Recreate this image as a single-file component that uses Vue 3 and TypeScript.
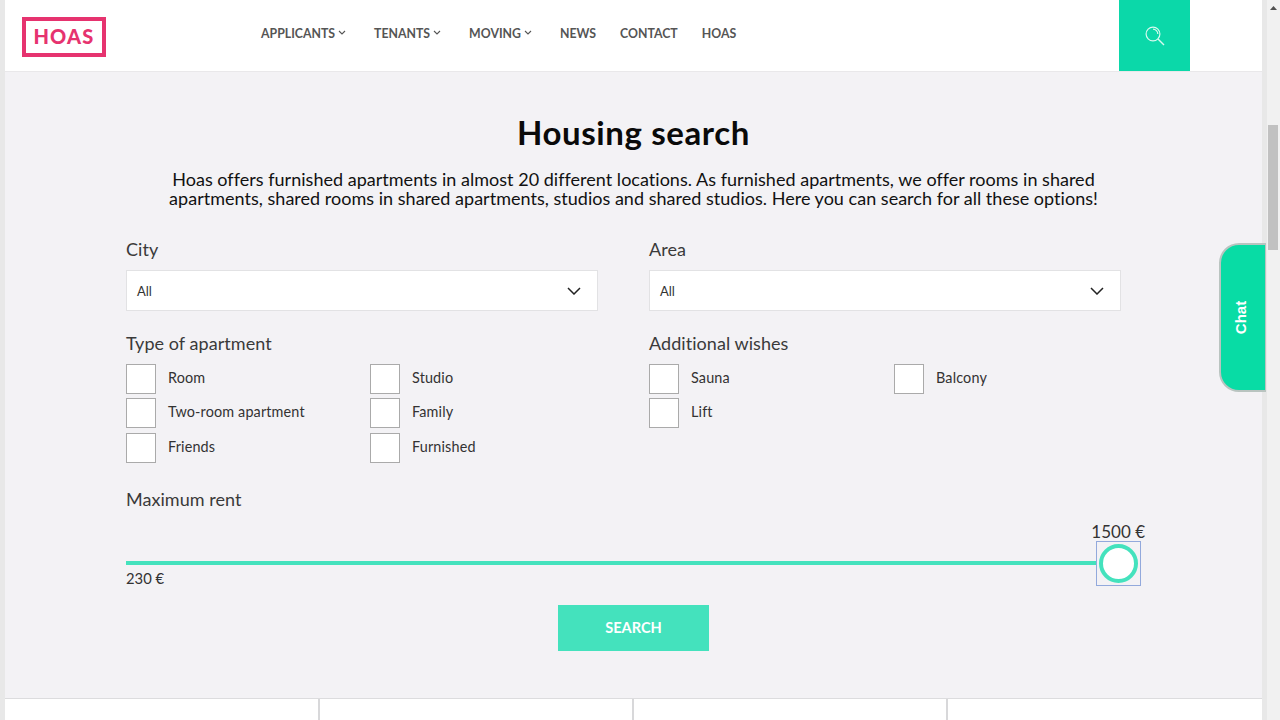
<script setup lang="ts">
const nav = [
  { label: 'APPLICANTS', caret: true },
  { label: 'TENANTS', caret: true },
  { label: 'MOVING', caret: true },
  { label: 'NEWS', caret: false },
  { label: 'CONTACT', caret: false },
  { label: 'HOAS', caret: false },
]
const types = ['Room', 'Studio', 'Two-room apartment', 'Family', 'Friends', 'Furnished']
const wishes = ['Sauna', 'Balcony', 'Lift']
const cards = [1, 2, 3, 4]
</script>

<template>
  <div class="window">
    <div class="edge"></div>
    <div class="page">
      <header class="header">
        <div class="logo-wrap"><div class="logo">HOAS</div></div>
        <nav class="nav">
          <span v-for="n in nav" :key="n.label" class="nav-item">
            {{ n.label }}
            <svg v-if="n.caret" class="caret" width="8" height="5" viewBox="0 0 8 5"><path d="M1 1l3 3 3-3" fill="none" stroke="#555" stroke-width="1.1" /></svg>
          </span>
        </nav>
        <div class="search-tile">
          <svg width="20" height="20" viewBox="0 0 20 20" fill="none" stroke="#d8f9ef" stroke-width="1.2">
            <circle cx="8" cy="8" r="6.9" />
            <path d="M8 3.2a4.8 4.8 0 0 1 4.8 4.8" />
            <path d="M13 13l6 6" stroke-width="1.4" />
          </svg>
        </div>
      </header>

      <main class="content">
        <h1>Housing search</h1>
        <p class="intro">Hoas offers furnished apartments in almost 20 different locations. As furnished apartments, we offer rooms in shared<br />apartments, shared rooms in shared apartments, studios and shared studios. Here you can search for all these options!</p>

        <div class="form">
          <div class="two">
            <div class="field">
              <div class="label">City</div>
              <div class="select">All
                <svg width="14" height="8" viewBox="0 0 14 8"><path d="M1 1l6 6 6-6" fill="none" stroke="#222" stroke-width="1.5" /></svg>
              </div>
            </div>
            <div class="field">
              <div class="label">Area</div>
              <div class="select">All
                <svg width="14" height="8" viewBox="0 0 14 8"><path d="M1 1l6 6 6-6" fill="none" stroke="#222" stroke-width="1.5" /></svg>
              </div>
            </div>
          </div>

          <div class="two checks-row">
            <div>
              <div class="label">Type of apartment</div>
              <div class="checks first">
                <label v-for="t in types" :key="t" class="check"><span class="box"></span>{{ t }}</label>
              </div>
            </div>
            <div>
              <div class="label">Additional wishes</div>
              <div class="checks">
                <label v-for="w in wishes" :key="w" class="check"><span class="box"></span>{{ w }}</label>
              </div>
            </div>
          </div>

          <div class="label rent-label">Maximum rent</div>
          <div class="slider">
            <div class="track"></div>
            <span class="max">1500 €</span>
            <span class="handle"><span class="knob"></span></span>
          </div>
          <div class="min">230 €</div>
          <div class="actions"><button class="search-btn">SEARCH</button></div>
        </div>
      </main>

      <div class="cards">
        <div v-for="c in cards" :key="c" class="card"></div>
      </div>
    </div>
    <div class="scrollbar">
      <svg class="arrow" width="7" height="4" viewBox="0 0 7 4"><path d="M3.5 0l3.5 4H0z" fill="#505050" /></svg>
      <div class="thumb"></div>
    </div>
    <div class="chat"><span>Chat</span></div>
  </div>
</template>

<style>
html, body { margin: 0; overflow: hidden; }
</style>

<style scoped>
.window {
  position: relative;
  display: flex;
  width: 1280px;
  height: 720px;
  overflow: hidden;
  background: #f3f2f5;
  font-family: Lato, "Noto Sans", sans-serif;
  color: #222;
}
.edge { width: 5px; flex: none; background: #e8e8e8; }
.page { width: 1257px; flex: none; display: flex; flex-direction: column; }
.header {
  height: 71px;
  flex: none;
  display: flex;
  background: #fff;
  border-bottom: 1px solid #e9e8ea;
}
.logo-wrap { width: 256px; flex: none; padding: 17px 0 0 17px; box-sizing: border-box; }
.logo {
  width: 84px;
  height: 40px;
  box-sizing: border-box;
  border: 4px solid #e6336f;
  color: #e6336f;
  font-weight: 900;
  font-size: 20px;
  letter-spacing: 1.2px;
  line-height: 31px;
  text-align: center;
}
.nav { display: flex; gap: 24px; flex: 1; align-items: center; height: 66px; }
.nav-item {
  font-size: 12.3px;
  font-weight: 700;
  color: #555;
  display: inline-flex;
  align-items: center;
  gap: 3px;
  white-space: nowrap;
}
.caret { margin: 0 4px 2px 0; }
.search-tile {
  width: 71px;
  height: 71px;
  margin-right: 72px;
  background: #0bd8a9;
  display: flex;
  align-items: center;
  justify-content: center;
}
.content { flex: 1; display: flex; flex-direction: column; align-items: center; min-height: 0; }
h1 {
  margin: 40px 0 0;
  font-size: 33px;
  line-height: 40px;
  font-weight: 700;
  letter-spacing: 0.6px;
  color: #0a0a0a;
}
.intro {
  margin: 18px 0 0;
  font-size: 18px;
  line-height: 19px;
  letter-spacing: 0.02px;
  text-align: center;
  color: #111;
  white-space: nowrap;
}
.form { width: 1015px; margin-top: 30px; }
.two { display: grid; grid-template-columns: 492px 492px; column-gap: 31px; }
.label { font-size: 18px; line-height: 22px; color: #3a3a3a; letter-spacing: 0.05px; }
.select {
  margin: 10px 20px 0 0;
  height: 41px;
  box-sizing: border-box;
  background: #fff;
  border: 1px solid #e2e2e4;
  padding: 0 16px 0 10px;
  display: flex;
  align-items: center;
  justify-content: space-between;
  font-size: 13px;
  color: #333;
}
.checks-row { margin-top: 21px; height: 131px; }
.checks { display: grid; grid-template-columns: 245px 245px; grid-auto-rows: 34.4px; margin-top: 10px; }
.checks.first { grid-template-columns: 244px 245px; }
.check { display: flex; align-items: flex-start; font-size: 14.4px; line-height: 27px; letter-spacing: 0.15px; color: #333; }
.box {
  width: 30px;
  height: 30px;
  box-sizing: border-box;
  background: #fff;
  border: 1px solid #aaa;
  margin-right: 12px;
  flex: none;
}
.rent-label { margin-top: 25px; }
.slider { position: relative; height: 45px; margin-top: 31px; }
.track { position: absolute; left: 0; right: 45px; top: 20px; height: 4px; background: #44e2bd; }
.max { position: absolute; right: -4px; top: -19px; font-size: 17px; line-height: 20px; color: #333; }
.handle {
  position: absolute;
  right: 0;
  top: 0;
  width: 45px;
  height: 45px;
  box-sizing: border-box;
  border: 1px solid #92a9dc;
  display: flex;
  align-items: center;
  justify-content: center;
}
.knob {
  width: 39px;
  height: 39px;
  box-sizing: border-box;
  border-radius: 50%;
  border: 4px solid #44e2bd;
  background: #fff;
}
.min { margin-top: -16px; font-size: 14.8px; line-height: 16px; color: #333; }
.actions { display: flex; justify-content: center; margin-top: 19px; }
.search-btn {
  width: 151px;
  height: 46px;
  border: 0;
  padding: 0 0 2px;
  background: #44e2bd;
  color: #fff;
  font: 700 14.6px Lato, sans-serif;
}
.cards {
  height: 21px;
  flex: none;
  display: flex;
  padding-left: 1px;
  background: #fff;
  border-top: 1px solid #dcdcde;
}
.card { flex: 0 0 314px; box-sizing: border-box; border-right: 2px solid #d8d8da; }
.card:last-child { border-right: 0; }
.scrollbar { flex: 1; position: relative; background: #f1f1f1; border-left: 5px solid #e8e8e8; }
.arrow { position: absolute; top: 6px; left: 3px; }
.thumb { position: absolute; left: 1px; width: 10px; top: 125px; height: 125px; background: #c1c1c1; }
.chat {
  position: absolute;
  left: 1219px;
  top: 243px;
  width: 47px;
  height: 149px;
  box-sizing: border-box;
  padding-right: 4px;
  background: #08dca5;
  border: 2px solid #b9c4c0;
  border-right-width: 1px;
  border-radius: 20px 0 0 20px;
  display: flex;
  align-items: center;
  justify-content: center;
  color: #fff;
  font: 700 15px "Liberation Sans", sans-serif;
}
.chat span { transform: rotate(-90deg); display: block; }
</style>
